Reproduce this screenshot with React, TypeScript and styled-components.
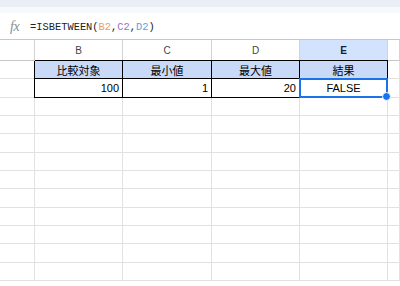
import React from "react";
import styled, { createGlobalStyle } from "styled-components";

const Global = createGlobalStyle`
  html, body { margin: 0; padding: 0; background: #fff; }
  body { width: 400px; height: 286px; overflow: hidden; font-family: "Liberation Sans", Arial, sans-serif; }
`;

const Page = styled.div`
  width: 400px;
  height: 286px;
  overflow: hidden;
  display: flex;
  flex-direction: column;
`;

const ToolbarEdge = styled.div`
  height: 7px;
  background: #eaeff7;
`;

const ToolbarShade = styled.div`
  height: 6px;
  background: #f7f9fc;
`;

const FormulaBar = styled.div`
  box-sizing: border-box;
  height: 27px;
  border-bottom: 1px solid #c7c7c7;
  display: flex;
  align-items: center;
  padding-left: 10px;
  gap: 8px;
`;

const FxLabel = styled.span`
  font-family: "Liberation Serif", "Times New Roman", serif;
  font-style: italic;
  font-size: 14px;
  color: #8a8d91;
  letter-spacing: -0.5px;
  width: 12px;
  margin-top: 1px;
`;

const Formula = styled.span`
  font-family: "Liberation Mono", "DejaVu Sans Mono", monospace;
  font-size: 10.4px;
  color: #202124;
  margin-top: 1px;
`;

const Ref = styled.span<{ $c: string }>`
  color: ${(p) => p.$c};
`;

const Sheet = styled.div`
  display: grid;
  grid-template-columns: 35px 88px 89px 88px 88px 1fr;
  grid-template-rows: 21px 18px 19px 18px 18px 19px 18px 18px 19px 18px 18px 19px 18px;
`;

const HeadCell = styled.div<{ $sel?: boolean }>`
  box-sizing: border-box;
  border-right: 1px solid #d3d3d3;
  border-bottom: 1px solid #c7c7c7;
  background: ${(p) => (p.$sel ? "#d3e3fd" : "#fff")};
  color: ${(p) => (p.$sel ? "#0b1f44" : "#444")};
  font-size: 10px;
  display: flex;
  align-items: center;
  justify-content: center;
  font-weight: ${(p) => (p.$sel ? 700 : 400)};
`;

const Cell = styled.div<{
  $bg?: string;
  $align?: "left" | "center" | "right";
  $boxed?: boolean;
  $top?: boolean;
  $left?: boolean;
}>`
  position: relative;
  box-sizing: border-box;
  border-right: 1px solid ${(p) => (p.$boxed ? "#000" : "#e1e1e1")};
  border-bottom: 1px solid ${(p) => (p.$boxed ? "#000" : "#e1e1e1")};
  background: ${(p) => p.$bg || "#fff"};
  box-shadow: ${(p) =>
    [p.$top ? "0 -1px 0 #000" : "", p.$left ? "-1px 0 0 #000" : ""]
      .filter(Boolean)
      .join(", ") || "none"};
  font-family: "Liberation Sans", "Noto Sans CJK JP", Arial, sans-serif;
  font-size: 11px;
  color: #000;
  display: flex;
  align-items: center;
  justify-content: ${(p) =>
    p.$align === "right" ? "flex-end" : p.$align === "center" ? "center" : "flex-start"};
  padding: 0 3px;
  white-space: nowrap;
`;

const Selection = styled.div`
  position: absolute;
  z-index: 2;
  left: -1px;
  top: -1px;
  right: -1px;
  bottom: -1px;
  border: 2px solid #1a73e8;
  pointer-events: none;
`;

const Handle = styled.div`
  position: absolute;
  right: -5px;
  bottom: -5px;
  width: 7px;
  height: 7px;
  border-radius: 50%;
  background: #1a73e8;
  border: 1px solid #fff;
`;

const cols = ["", "B", "C", "D", "E", ""];
const headers = ["比較対象", "最小値", "最大値", "結果"];
const values: { v: string; a: "right" | "center" }[] = [
  { v: "100", a: "right" },
  { v: "1", a: "right" },
  { v: "20", a: "right" },
  { v: "FALSE", a: "center" },
];

export default function App() {
  const emptyRows = Array.from({ length: 10 });
  return (
    <Page>
      <Global />
      <ToolbarEdge />
      <ToolbarShade />
      <FormulaBar>
        <FxLabel>fx</FxLabel>
        <Formula>
          =ISBETWEEN(<Ref $c="#e8a060">B2</Ref>,<Ref $c="#9c6fc4">C2</Ref>,
          <Ref $c="#5c9ee0">D2</Ref>)
        </Formula>
      </FormulaBar>
      <Sheet>
        {cols.map((c, i) => (
          <HeadCell key={"h" + i} $sel={c === "E"}>
            {c}
          </HeadCell>
        ))}
        <Cell />
        {headers.map((h, i) => (
          <Cell key={"t" + i} $bg="#c9daf8" $align="center" $boxed $top $left={i === 0}>
            {h}
          </Cell>
        ))}
        <Cell />
        <Cell />
        {values.map((v, i) => (
          <Cell key={"v" + i} $align={v.a} $boxed $left={i === 0}>
            {v.v}
            {i === 3 && (
              <Selection>
                <Handle />
              </Selection>
            )}
          </Cell>
        ))}
        <Cell />
        {emptyRows.map((_, r) =>
          cols.map((_, c) => <Cell key={`e${r}-${c}`} />)
        )}
      </Sheet>
    </Page>
  );
}
